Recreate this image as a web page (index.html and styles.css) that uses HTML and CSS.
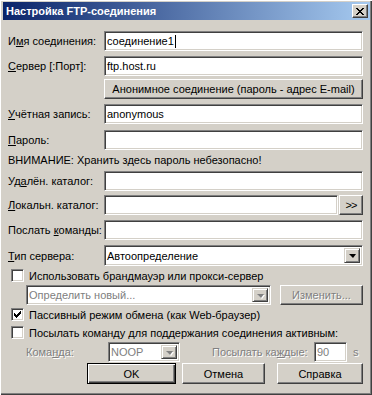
FILE: index.html
```html
<!DOCTYPE html>
<html lang="ru">
<head>
    <meta charset="UTF-8">
    <title>Настройка FTP-соединения</title>
    <link rel="stylesheet" href="styles.css">
</head>
<body>
    <div class="window">
        <div class="titlebar">
            <span class="title">Настройка FTP-соединения</span>
            <span class="close-btn">
                <svg width="8" height="7" viewBox="0 0 8 7">
                    <path d="M0 0h2v1H0zM6 0h2v1H6zM1 1h2v1H1zM5 1h2v1H5zM2 2h4v1H2zM3 3h2v1H3zM2 4h4v1H2zM1 5h2v1H1zM5 5h2v1H5zM0 6h2v1H0zM6 6h2v1H6z" fill="#000"/>
                </svg>
            </span>
        </div>
        <div class="content">
            <div class="row r1">
                <span class="lbl">И<u>м</u>я соединения:</span>
                <div class="field">соединение1<span class="caret"></span></div>
            </div>
            <div class="row r2">
                <span class="lbl"><u>С</u>ервер [:Порт]:</span>
                <div class="field">ftp.host.ru</div>
            </div>
            <div class="row r-btn">
                <span class="lbl"></span>
                <div class="btn wide">Анонимное соединение (пароль - адрес E-mail)</div>
            </div>
            <div class="row r3">
                <span class="lbl"><u>У</u>чётная запись:</span>
                <div class="field">anonymous</div>
            </div>
            <div class="row r4">
                <span class="lbl"><u>П</u>ароль:</span>
                <div class="field"></div>
            </div>
            <div class="row warn">ВНИМАНИЕ: Хранить здесь пароль небезопасно!</div>
            <div class="row r5">
                <span class="lbl">Уд<u>а</u>лён. каталог:</span>
                <div class="field"></div>
            </div>
            <div class="row r6">
                <span class="lbl"><u>Л</u>окальн. каталог:</span>
                <div class="field"></div>
                <div class="btn browse">&gt;&gt;</div>
            </div>
            <div class="row r7">
                <span class="lbl">Послать <u>к</u>оманды:</span>
                <div class="field"></div>
            </div>
            <div class="row r8">
                <span class="lbl"><u>Т</u>ип сервера:</span>
                <div class="field combo">
                    <span class="combo-text">Автоопределение</span>
                    <span class="drop"><span class="arrow"></span></span>
                </div>
            </div>
            <div class="row check cb1">
                <span class="box"></span>
                <span>Использовать брандмауэр или прокси-сервер</span>
            </div>
            <div class="row proxy">
                <div class="field combo disabled proxy-combo">
                    <span class="combo-text">Определить новый...</span>
                    <span class="drop"><span class="arrow"></span></span>
                </div>
                <div class="btn disabled change">Изменить...</div>
            </div>
            <div class="row check cb2">
                <span class="box">
                    <svg width="7" height="7" viewBox="0 0 7 7">
                        <path d="M6 0h1v3H6zM5 1h1v3H5zM4 2h1v3H4zM0 2h1v3H0zM1 3h1v3H1zM2 4h1v3H2zM3 3h1v3H3z" fill="#000"/>
                    </svg>
                </span>
                <span>Пассивный режим обмена (как Web-браузер)</span>
            </div>
            <div class="row check cb3">
                <span class="box"></span>
                <span>Посылать команду для поддержания соединения активным:</span>
            </div>
            <div class="row keep">
                <span class="lbl-dis cmd-lbl">Кома<u>н</u>да:</span>
                <div class="field combo disabled noop">
                    <span class="combo-text">NOOP</span>
                    <span class="drop"><span class="arrow"></span></span>
                </div>
                <span class="lbl-dis every-lbl">Посылать ка<u>ж</u>дые:</span>
                <div class="field disabled secs">90</div>
                <span class="lbl-dis unit">s</span>
            </div>
            <div class="row buttons">
                <div class="btn default ok">OK</div>
                <div class="btn cancel">Отмена</div>
                <div class="btn help">Справка</div>
            </div>
        </div>
    </div>
</body>
</html>
```

FILE: styles.css
```css
html, body {
    margin: 0;
    padding: 0;
    background-color: #d4d0c8;
}
body {
    font-family: "Liberation Sans", Arial, sans-serif;
    font-size: 11px;
    color: #000;
}
u {
    text-decoration: underline;
    text-underline-offset: 1px;
}
.window {
    box-sizing: border-box;
    width: 372px;
    height: 395px;
    padding: 2px 2px 0 3px;
    background-color: #d4d0c8;
    box-shadow: inset 1px 1px #fff, inset -1px -1px #404040, inset -2px -2px #808080;
    overflow: hidden;
}
.titlebar {
    display: flex;
    align-items: center;
    height: 18px;
    padding: 0 2px 0 3px;
    background: linear-gradient(to right, #0a246a, #a6caf0);
}
.title {
    flex: 1;
    color: #fff;
    font-weight: bold;
    font-size: 11px;
    white-space: nowrap;
}
.close-btn {
    box-sizing: border-box;
    display: flex;
    align-items: center;
    justify-content: center;
    width: 16px;
    height: 14px;
    background-color: #d4d0c8;
    border-top: 1px solid #fff;
    border-left: 1px solid #fff;
    border-right: 1px solid #404040;
    border-bottom: 1px solid #404040;
    box-shadow: inset -1px -1px #808080;
}
.content {
    padding: 11px 7px 0 5px;
}
.row {
    display: flex;
    align-items: center;
    height: 20px;
    white-space: nowrap;
}
.lbl {
    width: 96px;
    flex-shrink: 0;
}
.field {
    box-sizing: border-box;
    flex: 1;
    height: 20px;
    display: flex;
    align-items: center;
    padding-left: 2px;
    background-color: #fff;
    border-top: 1px solid #808080;
    border-left: 1px solid #808080;
    border-right: 1px solid #fff;
    border-bottom: 1px solid #fff;
    box-shadow: inset 1px 1px #404040, inset -1px -1px #d4d0c8;
    overflow: hidden;
}
.caret {
    display: inline-block;
    width: 1px;
    height: 13px;
    margin-left: 1px;
    background-color: #000;
}
.btn {
    box-sizing: border-box;
    display: flex;
    align-items: center;
    justify-content: center;
    height: 20px;
    background-color: #d4d0c8;
    border-top: 1px solid #fff;
    border-left: 1px solid #fff;
    border-right: 1px solid #404040;
    border-bottom: 1px solid #404040;
    box-shadow: inset -1px -1px #808080;
}
.btn.wide {
    flex: 1;
}
.btn.disabled, .field.disabled, .lbl-dis {
    color: #808080;
    text-shadow: 1px 1px #fff;
}
.field.disabled {
    text-shadow: none;
}
.r2 { margin-top: 5px; }
.r-btn { margin-top: 3px; }
.r3 { margin-top: 5px; }
.r4 { margin-top: 6px; }
.warn { margin-top: 0; }
.r5 { margin-top: 1px; }
.r6 { margin-top: 4px; }
.r7 { margin-top: 5px; }
.r8 { margin-top: 5px; height: 21px; }
.browse {
    width: 24px;
    height: 20px;
    margin-left: 1px;
    font-size: 11px;
    letter-spacing: -1px;
}
.combo {
    padding-right: 2px;
}
.r8 .combo {
    height: 21px;
}
.combo-text {
    flex: 1;
}
.drop {
    box-sizing: border-box;
    display: flex;
    align-items: center;
    justify-content: center;
    width: 16px;
    height: calc(100% - 4px);
    background-color: #d4d0c8;
    border-top: 1px solid #d4d0c8;
    border-left: 1px solid #d4d0c8;
    border-right: 1px solid #404040;
    border-bottom: 1px solid #404040;
    box-shadow: inset 1px 1px #fff, inset -1px -1px #808080;
}
.arrow {
    width: 0;
    height: 0;
    border-left: 4px solid transparent;
    border-right: 3px solid transparent;
    border-top: 4px solid #000;
    margin-top: 1px;
}
.disabled .arrow {
    border-top-color: #808080;
    filter: drop-shadow(1px 1px 0 #fff);
}
.check {
    height: 15px;
}
.cb1 { margin-top: 2px; }
.cb2 { margin-top: 2px; }
.cb3 { margin-top: 3px; }
.box {
    box-sizing: border-box;
    display: flex;
    align-items: center;
    justify-content: center;
    width: 13px;
    height: 13px;
    margin-left: 3px;
    margin-right: 5px;
    background-color: #fff;
    border-top: 1px solid #808080;
    border-left: 1px solid #808080;
    border-right: 1px solid #fff;
    border-bottom: 1px solid #fff;
    box-shadow: inset 1px 1px #404040, inset -1px -1px #d4d0c8;
}
.proxy {
    margin-top: 2px;
    padding-left: 18px;
}
.proxy-combo {
    flex: none;
    width: 245px;
}
.change {
    width: 86px;
    margin-left: 9px;
}
.keep {
    margin-top: 2px;
    padding-left: 18px;
}
.cmd-lbl {
    width: 82px;
}
.noop {
    flex: none;
    width: 72px;
}
.every-lbl {
    margin-left: 32px;
    width: 102px;
}
.secs {
    flex: none;
    width: 33px;
}
.unit {
    margin-left: 6px;
}
.buttons {
    margin-top: 1px;
    height: 21px;
    padding-left: 79px;
}
.buttons .btn {
    height: 21px;
}
.ok {
    width: 89px;
    border: 1px solid #000;
    box-shadow: inset 1px 1px #fff, inset -1px -1px #404040, inset -2px -2px #808080;
}
.cancel {
    width: 83px;
    margin-left: 6px;
}
.help {
    width: 86px;
    margin-left: 12px;
}
```
